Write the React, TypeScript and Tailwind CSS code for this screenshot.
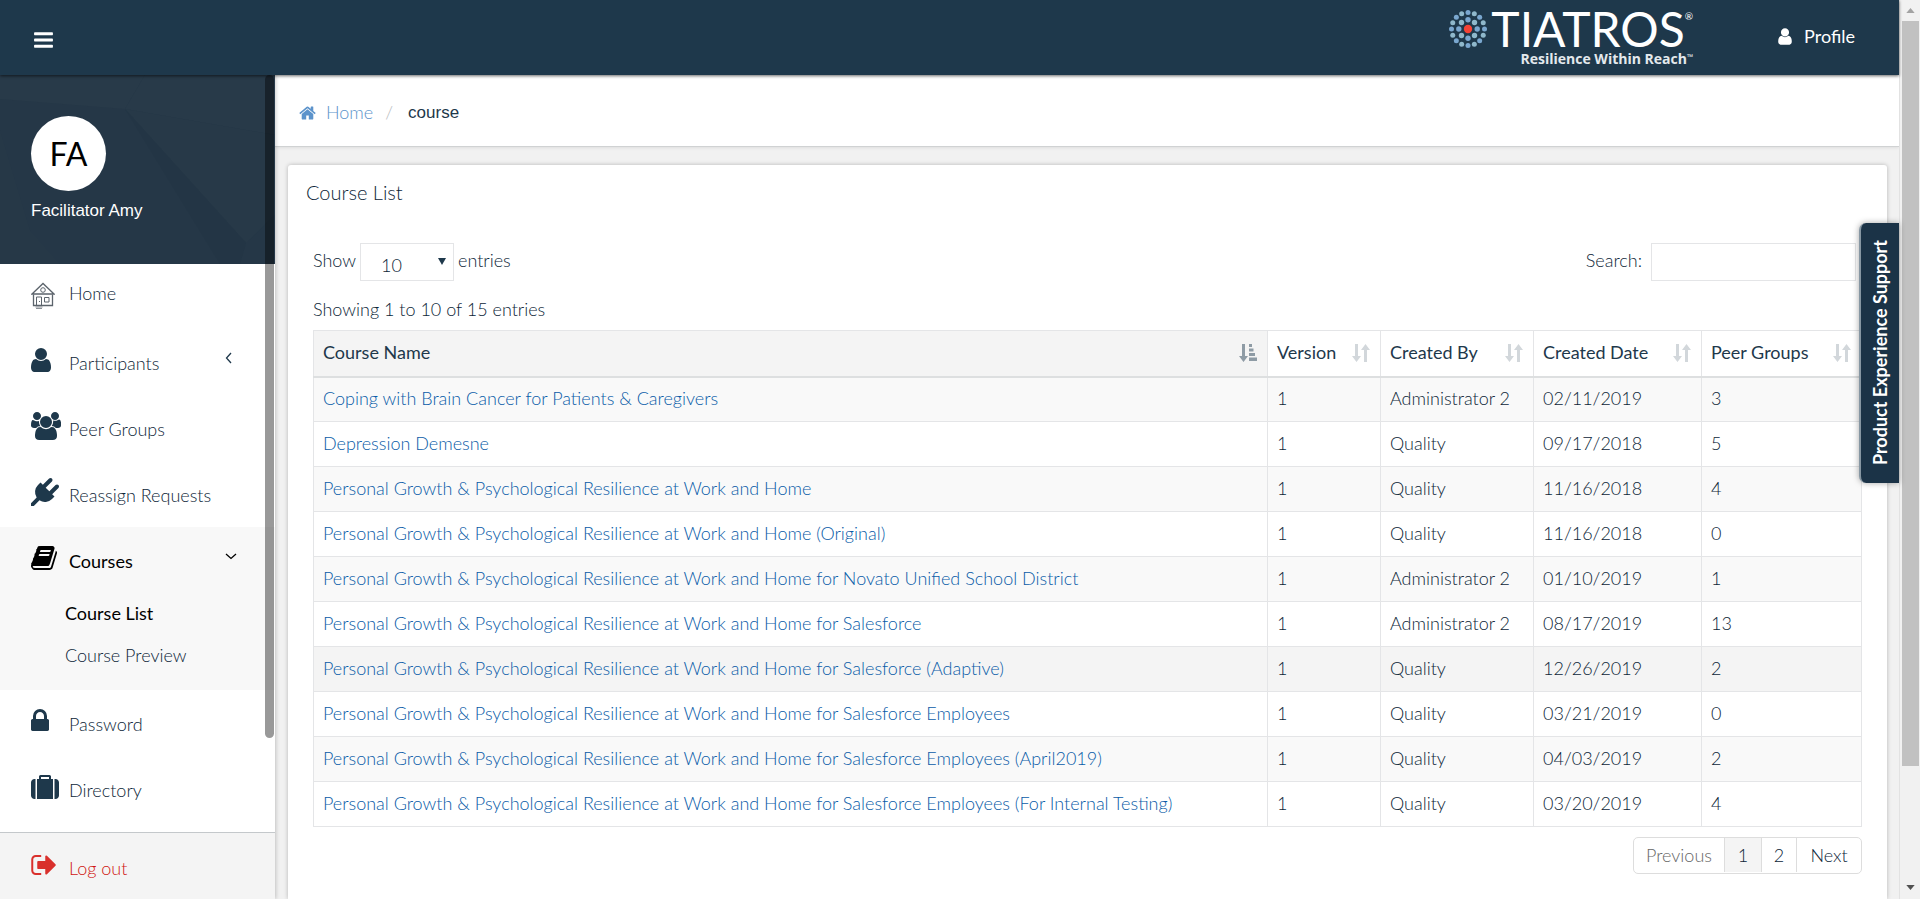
import { useState, type ReactNode } from "react";

type GlyphProps = { d: string; width: number; className: string };

function Glyph({ d, width, className }: GlyphProps) {
  return (
    <svg viewBox={`0 0 ${width} 1792`} className={className} fill="currentColor" aria-hidden="true">
      <path d={d} />
    </svg>
  );
}

const BARS =
  "M1536 1344v128q0 26-19 45t-45 19h-1408q-26 0-45-19t-19-45v-128q0-26 19-45t45-19h1408q26 0 45 19t19 45zm0-512v128q0 26-19 45t-45 19h-1408q-26 0-45-19t-19-45v-128q0-26 19-45t45-19h1408q26 0 45 19t19 45zm0-512v128q0 26-19 45t-45 19h-1408q-26 0-45-19t-19-45v-128q0-26 19-45t45-19h1408q26 0 45 19t19 45z";
const USER =
  "M1280 1399q0 109-62.5 187t-150.5 78h-854q-88 0-150.5-78t-62.5-187q0-85 8.5-160.5t31.5-152 58.5-131 94-89 134.5-34.5q131 128 313 128t313-128q76 0 134.5 34.5t94 89 58.5 131 31.5 152 8.5 160.5zm-256-887q0 159-112.5 271.5t-271.5 112.5-271.5-112.5-112.5-271.5 112.5-271.5 271.5-112.5 271.5 112.5 112.5 271.5z";
const USERS =
  "M593 896q-162 5-265 128h-134q-82 0-138-40.5t-56-118.5q0-353 124-353 6 0 43.5 21t97.5 42.5 119 21.5q67 0 133-23-5 37-5 66 0 159 93 287zm1071 637q0 120-73 189.5t-194 69.5h-874q-121 0-194-69.5t-73-189.5q0-53 3.5-103.5t14-109 26.5-108.5 43-97.5 62-81 85.5-53.5 111.5-20q10 0 43 21.5t73 48 107 48 135 21.5 135-21.5 107-48 73-48 43-21.5q61 0 111.5 20t85.5 53.5 62 81 43 97.5 26.5 108.5 14 109 3.5 103.5zm-1024-1277q0 106-75 181t-181 75-181-75-75-181 75-181 181-75 181 75 75 181zm704 384q0 159-112.5 271.5t-271.5 112.5-271.5-112.5-112.5-271.5 112.5-271.5 271.5-112.5 271.5 112.5 112.5 271.5zm576 225q0 78-56 118.5t-138 40.5h-134q-103-123-265-128 93-128 93-287 0-29-5-66 66 23 133 23 59 0 119-21.5t97.5-42.5 43.5-21q124 0 124 353zm-128-609q0 106-75 181t-181 75-181-75-75-181 75-181 181-75 181 75 75 181z";
const PLUG =
  "M1755 453q37 38 37 90.5t-37 90.5l-401 400 150 150-160 160q-163 163-389.5 186.5t-411.5-100.5l-362 362h-181v-181l362-362q-124-185-100.5-411.5t186.5-389.5l160-160 150 150 400-401q38-37 91-37t90 37 37 90.5-37 90.5l-400 401 234 234 401-400q38-37 91-37t90 37z";
const BOOK =
  "M1639 478q40 57 18 129l-275 906q-19 64-76.5 107.5t-122.5 43.5h-923q-77 0-148.5-53.5t-99.5-131.5q-24-67-2-127 0-4 3-27t4-37q1-8-3-21.5t-3-19.5q2-11 8-21t16.5-23.5 16.5-23.5q23-38 45-91.5t30-91.5q3-10 .5-30t-.5-28q3-11 17-28t17-23q21-36 42-92t25-90q1-9-2.5-32t.5-28q4-13 22-30.5t22-22.5q19-26 42.5-84.5t27.5-96.5q1-8-3-25.5t-2-26.5q2-8 9-18t18-23 17-21q8-12 16.5-30.5t15-35 16-36 19.5-32 26.5-23.5 36-11.5 47.5 5.5l-1 3q38-9 51-9h761q74 0 114 56t18 130l-274 906q-36 119-71.5 153.5t-128.5 34.5h-869q-27 0-38 15-11 16-1 43 24 70 144 70h923q29 0 56-15.5t35-41.5l300-987q7-22 5-57 38 15 59 43zm-1064 2q-4 13 2 22.5t20 9.5h608q13 0 25.5-9.5t16.5-22.5l21-64q4-13-2-22.5t-20-9.5h-608q-13 0-25.5 9.5t-16.5 22.5zm-83 256q-4 13 2 22.5t20 9.5h608q13 0 25.5-9.5t16.5-22.5l21-64q4-13-2-22.5t-20-9.5h-608q-13 0-25.5 9.5t-16.5 22.5z";
const LOCK =
  "M320 768h512v-192q0-106-75-181t-181-75-181 75-75 181v192zm832 96v576q0 40-28 68t-68 28h-960q-40 0-68-28t-28-68v-576q0-40 28-68t68-28h32v-192q0-184 132-316t316-132 316 132 132 316v192h32q40 0 68 28t28 68z";
const SUITCASE =
  "M640 384h512v-128h-512v128zm-352 0v1280h-64q-92 0-158-66t-66-158v-832q0-92 66-158t158-66h64zm1120 0v1280h-1024v-1280h128v-160q0-40 28-68t68-28h576q40 0 68 28t28 68v160h128zm384 224v832q0 92-66 158t-158 66h-64v-1280h64q92 0 158 66t66 158z";
const SIGN_OUT =
  "M640 1440q0 4 1 20t.5 26.5-3 23.5-10 19.5-20.5 6.5h-320q-119 0-203.5-84.5t-84.5-203.5v-704q0-119 84.5-203.5t203.5-84.5h320q13 0 22.5 9.5t9.5 22.5q0 4 1 20t.5 26.5-3 23.5-10 19.5-20.5 6.5h-320q-66 0-113 47t-47 113v704q0 66 47 113t113 47h312l11.5 1 11.5 3 8 5.5 7 9 2 13.5zm928-544q0 26-19 45l-544 544q-19 19-45 19t-45-19-19-45v-288h-448q-26 0-45-19t-19-45v-384q0-26 19-45t45-19h448v-288q0-26 19-45t45-19 45 19l544 544q19 19 19 45z";
const HOME =
  "M1408 992v480q0 26-19 45t-45 19h-384v-384h-256v384h-384q-26 0-45-19t-19-45v-480q0-1 .5-3t.5-3l575-474 575 474q1 2 1 6zm223-69l-62 74q-8 9-21 11h-3q-13 0-21-7l-692-577-692 577q-12 8-24 7-13-2-21-11l-62-74q-8-10-7-23.5t11-21.5l719-599q32-26 76-26t76 26l244 204v-195q0-14 9-23t23-9h192q14 0 23 9t9 23v408l219 182q10 8 11 21.5t-7 23.5z";

function HouseSketch() {
  return (
    <svg viewBox="0 0 24 28" className="h-7 w-6" fill="none" stroke="#5c646c" aria-hidden="true">
      <path d="M1 13 12 2.500 23 13Z" strokeWidth="1.300" />
      <path d="M2.500 13.500V24.500H21.500V13.500" strokeWidth="1.300" />
      <circle cx="12" cy="9" r="2.300" />
      <path d="M5.500 24.500V16H10.500V24.500M13.500 16.500H18V21H13.500Z" />
      <path d="M4.500 26H11.500M5 27.500H11" strokeOpacity="0.700" />
      <path d="M8.500 20V21" />
    </svg>
  );
}

const outerDots = Array.from({ length: 16 }, (_, i) => i);
const innerDots = Array.from({ length: 8 }, (_, i) => i);

function LogoMark() {
  return (
    <svg viewBox="-19 -19 38 38" className="size-[38px]" aria-hidden="true">
      {outerDots.map((i) => (
        <circle
          key={i}
          cx={Math.cos((i * Math.PI) / 8) * 16.5}
          cy={Math.sin((i * Math.PI) / 8) * 16.5}
          r="2.500"
          fill={i % 4 === 0 || i % 4 === 2 ? "#7aa7cf" : "#8fb8cb"}
        />
      ))}
      {innerDots.map((i) => (
        <circle
          key={i}
          cx={Math.cos((i * Math.PI) / 4) * 9.2}
          cy={Math.sin((i * Math.PI) / 4) * 9.2}
          r="2.700"
          fill={i % 2 === 0 ? "#7aa7cf" : "#8fb8cb"}
        />
      ))}
      <circle r="4.200" fill="#f44336" />
    </svg>
  );
}

function Header() {
  return (
    <header className="relative z-20 flex h-[75px] shrink-0 items-center justify-between bg-[#1e384b] pr-[44px] pl-[34px] text-white shadow-[0_1px_3px_rgba(0,0,0,0.6)]">
      <button type="button" aria-label="Toggle menu" className="mt-1">
        <Glyph d={BARS} width={1536} className="h-[22px] w-[19px]" />
      </button>
      <div className="flex items-center gap-[85px]">
        <a href="#" className="flex h-[56px] items-start gap-1" aria-label="Tiatros">
          <LogoMark />
          <span className="flex flex-col items-end gap-1">
            <span className="flex items-start">
              <span className="text-[48px] leading-[38px]">TIATROS</span>
              <span className="text-[10px] leading-[12px]">®</span>
            </span>
            <span className="flex items-start font-['Open_Sans',sans-serif] text-[14px] leading-[14px] font-bold text-[#e4e9ed]">
              Resilience Within Reach<span className="text-[8px] leading-[10px]">™</span>
            </span>
          </span>
        </a>
        <a href="#" className="mb-[3px] flex items-center gap-3 text-[18px] leading-6">
          <Glyph d={USER} width={1280} className="h-[19px] w-[14px]" />
          Profile
        </a>
      </div>
    </header>
  );
}

type NavItemProps = { icon: ReactNode; label: string; active?: boolean; chevron?: "left" | "down" };

function NavItem({ icon, label, active, chevron }: NavItemProps) {
  return (
    <a
      href="#"
      className={`flex h-[66px] items-start pt-[17px] pr-[34px] pl-[31px] ${active ? "text-black" : "text-[#1e384b]"}`}
    >
      <span className="w-[38px]">{icon}</span>
      <span className={`mt-[5px] flex-1 leading-6 ${active ? "font-normal" : "font-light text-[#0d2638]"}`}>{label}</span>
      {chevron === "left" && (
        <svg viewBox="0 0 12 12" className="mt-1.5 mr-[6px] size-3" fill="none" stroke="currentColor" strokeWidth="1.300">
          <path d="M8 1 3.500 6 8 11" />
        </svg>
      )}
      {chevron === "down" && (
        <svg viewBox="0 0 12 12" className="mt-1.5 mr-1 size-3" fill="none" stroke="currentColor" strokeWidth="1.300">
          <path d="M1 4 6 8.500 11 4" />
        </svg>
      )}
    </a>
  );
}

function Sidebar() {
  return (
    <aside className="relative z-10 flex w-[275px] shrink-0 flex-col bg-white shadow-[1px_0_4px_rgba(0,0,0,0.2)]">
      <div className="relative h-[189px] shrink-0 overflow-hidden bg-[#253747]">
        <svg viewBox="0 0 275 189" preserveAspectRatio="none" className="absolute inset-0 size-full" aria-hidden="true">
          <path d="M0 0H145L125 34 0 24Z" fill="#283a49" />
          <path d="M145 0H275V60L125 34Z" fill="#283a49" />
          <path d="M125 34 275 60V140L246 168Z" fill="#273948" />
          <path d="M125 34 246 168 240 189H220Z" fill="#233545" />
          <path d="M0 55 30 155 60 189H0Z" fill="#263847" />
        </svg>
        <div className="relative pt-[41px] pl-[31px]">
          <div className="flex size-[75px] items-center justify-center rounded-full bg-white text-[32px] text-black">
            FA
          </div>
          <p className="mt-2 font-['Liberation_Sans',sans-serif] text-[17px] leading-6 text-white">Facilitator Amy</p>
        </div>
      </div>
      <nav className="flex-1">
        <a href="#" className="flex h-[65px] items-start pt-[17px] pl-[31px] font-light text-[#0d2638]">
          <span className="w-[38px]">
            <HouseSketch />
          </span>
          <span className="leading-6">Home</span>
        </a>
        <NavItem icon={<Glyph d={USER} width={1280} className="h-7 w-5" />} label="Participants" chevron="left" />
        <NavItem icon={<Glyph d={USERS} width={1920} className="h-7 w-[30px]" />} label="Peer Groups" />
        <NavItem icon={<Glyph d={PLUG} width={1792} className="size-7" />} label="Reassign Requests" />
        <div className="bg-[#f8f8f8] pb-[13px]">
          <NavItem icon={<Glyph d={BOOK} width={1664} className="h-7 w-[26px]" />} label="Courses" active chevron="down" />
          <a href="#" className="flex h-[42px] items-center pb-px pl-[65px] text-black">
            Course List
          </a>
          <a href="#" className="flex h-[42px] items-center pb-px pl-[65px] font-light text-[#0d2638]">
            Course Preview
          </a>
        </div>
        <NavItem icon={<Glyph d={LOCK} width={1152} className="h-7 w-[18px]" />} label="Password" />
        <NavItem icon={<Glyph d={SUITCASE} width={1792} className="size-7" />} label="Directory" />
      </nav>
      <a href="#" className="flex h-[67px] items-start border-t border-[#c4c8cb] bg-[#f4f4f4] pt-[18px] pl-[31px] font-light text-[#d9302c]">
        <span className="w-[38px]">
          <Glyph d={SIGN_OUT} width={1568} className="h-7 w-[25px]" />
        </span>
        <span className="mt-[5px] leading-6 text-[#d01612]">Log out</span>
      </a>
      <div className="absolute top-0 right-px h-[663px] w-[9px] rounded-full bg-black/40" />
    </aside>
  );
}

const columns = [
  { name: "Course Name", width: "" },
  { name: "Version", width: "w-[113px]" },
  { name: "Created By", width: "w-[153px]" },
  { name: "Created Date", width: "w-[168px]" },
  { name: "Peer Groups", width: "w-[160px]" },
];

const BASE = "Personal Growth & Psychological Resilience at Work and Home";

const courses = [
  ["Coping with Brain Cancer for Patients & Caregivers", "1", "Administrator 2", "02/11/2019", "3"],
  ["Depression Demesne", "1", "Quality", "09/17/2018", "5"],
  [BASE, "1", "Quality", "11/16/2018", "4"],
  [`${BASE} (Original)`, "1", "Quality", "11/16/2018", "0"],
  [`${BASE} for Novato Unified School District`, "1", "Administrator 2", "01/10/2019", "1"],
  [`${BASE} for Salesforce`, "1", "Administrator 2", "08/17/2019", "13"],
  [`${BASE} for Salesforce (Adaptive)`, "1", "Quality", "12/26/2019", "2"],
  [`${BASE} for Salesforce Employees`, "1", "Quality", "03/21/2019", "0"],
  [`${BASE} for Salesforce Employees (April2019)`, "1", "Quality", "04/03/2019", "2"],
  [`${BASE} for Salesforce Employees (For Internal Testing)`, "1", "Quality", "03/20/2019", "4"],
];

function SortedIcon() {
  return (
    <svg viewBox="0 0 18 18" className="size-[18px]" fill="#8e9ba5" aria-hidden="true">
      <path d="M3 0H6V12H9L4.500 18 0 12H3ZM10 0H13V3H10ZM10 4.500H14.500V7.500H10ZM10 9H16V12H10ZM10 13.500H18V17H10Z" />
    </svg>
  );
}

function SortIcon() {
  return (
    <svg viewBox="0 0 18 18" className="size-[18px]" fill="#d2d7db" aria-hidden="true">
      <path d="M3 0H6V12H9L4.500 18 0 12H3ZM12 18H15V6H18L13.500 0 9 6H12Z" />
    </svg>
  );
}

function CourseTable() {
  return (
    <table className="w-full table-fixed border-collapse border border-[#e4e5e7] text-left">
      <thead>
        <tr className="h-[46px]">
          {columns.map((column, i) => (
            <th
              key={column.name}
              className={`border-x border-b-2 border-[#e4e5e7] border-b-[#dddfe0] pr-[10px] pb-px pl-[9px] font-normal ${column.width} ${i === 0 ? "bg-[#f4f4f4]" : ""}`}
            >
              <span className="flex items-center justify-between whitespace-nowrap">
                {column.name}
                {i === 0 ? <SortedIcon /> : <SortIcon />}
              </span>
            </th>
          ))}
        </tr>
      </thead>
      <tbody className="font-light text-[#0d2638]">
        {courses.map((row, r) => (
          <tr key={row[0]} className={`h-[45px] ${r === 6 ? "bg-[#f4f4f4]" : r % 2 === 0 ? "bg-[#f9f9f9]" : "bg-white"}`}>
            {row.map((cell, c) => (
              <td key={columns[c].name} className="border border-[#e4e5e7] px-[9px] pb-0.5 whitespace-nowrap">
                {c === 0 ? (
                  <a href="#" className="text-[#0a5ca8]">
                    {cell}
                  </a>
                ) : (
                  cell
                )}
              </td>
            ))}
          </tr>
        ))}
      </tbody>
    </table>
  );
}

function Pagination() {
  return (
    <div className="mt-[10px] flex justify-end">
      <div className="flex h-[37px] divide-x divide-[#dddddd] overflow-hidden rounded-[5px] border border-[#dddddd] pb-px font-light text-[#0d2638]">
        <button type="button" className="w-[91px] text-[#666666]">
          Previous
        </button>
        <button type="button" className="w-[37px] bg-[#f4f4f4]">
          1
        </button>
        <button type="button" className="w-[35px]">
          2
        </button>
        <button type="button" className="w-[64px]">
          Next
        </button>
      </div>
    </div>
  );
}

function CourseCard() {
  const [search, setSearch] = useState("");
  return (
    <section className="mt-[18px] mr-3 ml-[13px] flex-1 rounded-t-[3px] bg-white pr-[25px] pl-[25px] shadow-[0_0_4px_rgba(0,0,0,0.25)]">
      <h1 className="-ml-[7px] pt-[15px] text-[20px] leading-6 font-light text-[#0d2638]">Course List</h1>
      <div className="mt-[39px] flex items-start justify-between font-light text-[#0d2638]">
        <div className="flex items-start gap-1">
          <label htmlFor="page-size" className="leading-[34px]">
            Show
          </label>
          <span className="relative">
            <select
              id="page-size"
              defaultValue="10"
              className="h-[38px] w-[94px] appearance-none rounded-none border border-[#e4e5e7] bg-white pt-[6px] pl-[20px] leading-6 outline-none"
            >
              <option>10</option>
              <option>25</option>
              <option>50</option>
              <option>100</option>
            </select>
            <svg viewBox="0 0 8 7" className="pointer-events-none absolute top-[15px] right-2 h-[7px] w-2" fill="#1e384b">
              <path d="M0 0H8L4 7Z" />
            </svg>
          </span>
          <span className="leading-[34px]">entries</span>
        </div>
        <div className="mr-[6px] flex items-start gap-[9px]">
          <label htmlFor="search" className="leading-[34px]">
            Search:
          </label>
          <input
            id="search"
            value={search}
            onChange={(event) => setSearch(event.target.value)}
            className="h-[38px] w-[205px] border border-[#e4e5e7] px-2 outline-none"
          />
        </div>
      </div>
      <p className="mt-4 mb-[9px] leading-6 font-light text-[#0d2638]">Showing 1 to 10 of 15 entries</p>
      <CourseTable />
      <Pagination />
    </section>
  );
}

function PageScrollbar() {
  return (
    <div className="flex w-[21px] shrink-0 flex-col items-center border-l border-[#e2e2e2] bg-[#f1f1f1]" aria-hidden="true">
      <div className="flex h-[21px] items-center">
        <svg viewBox="0 0 10 6" className="h-[5px] w-[9px]" fill="#a3a3a3">
          <path d="M0 6 5 0 10 6Z" />
        </svg>
      </div>
      <div className="h-[745px] w-[17px] bg-[#c1c1c1]" />
      <div className="flex flex-1 items-end pb-[9px]">
        <svg viewBox="0 0 10 6" className="h-[5px] w-[9px]" fill="#505050">
          <path d="M0 0 5 6 10 0Z" />
        </svg>
      </div>
    </div>
  );
}

export default function App() {
  return (
    <div className="flex h-screen overflow-hidden bg-[#f1f1f1] font-['Lato',sans-serif] text-[18px] text-[#1e384b]">
      <div className="relative flex min-w-0 flex-1 flex-col">
        <Header />
        <div className="flex min-h-0 flex-1">
          <Sidebar />
          <main className="flex min-w-0 flex-1 flex-col overflow-hidden">
            <nav aria-label="Breadcrumb" className="flex h-[72px] shrink-0 items-center border-b border-[#d0d2d3] bg-white pt-1 pl-6 shadow-[0_1px_3px_rgba(0,0,0,0.08)]">
              <a href="#" className="flex items-center gap-[10px] font-light text-[#5c93cb]">
                <Glyph d={HOME} width={1664} className="h-[18px] w-[17px]" />
                Home
              </a>
              <span className="mr-[11px] ml-3 font-light text-[#b8bcc0]">/</span>
              <span className="ml-1 font-['Liberation_Sans',sans-serif] text-[17px]">course</span>
            </nav>
            <CourseCard />
          </main>
        </div>
        <button
          type="button"
          className="absolute top-[223px] right-0 z-30 flex h-[260px] w-[40px] items-center justify-center rounded-l-[7px] border-l-2 border-[#8797a3] bg-[#1b3347] shadow-[0_0_6px_rgba(0,0,0,0.35)]"
        >
          <span className="rotate-180 text-[18px] font-bold whitespace-nowrap text-white [writing-mode:vertical-rl]">
            Product Experience Support
          </span>
        </button>
      </div>
      <PageScrollbar />
    </div>
  );
}
